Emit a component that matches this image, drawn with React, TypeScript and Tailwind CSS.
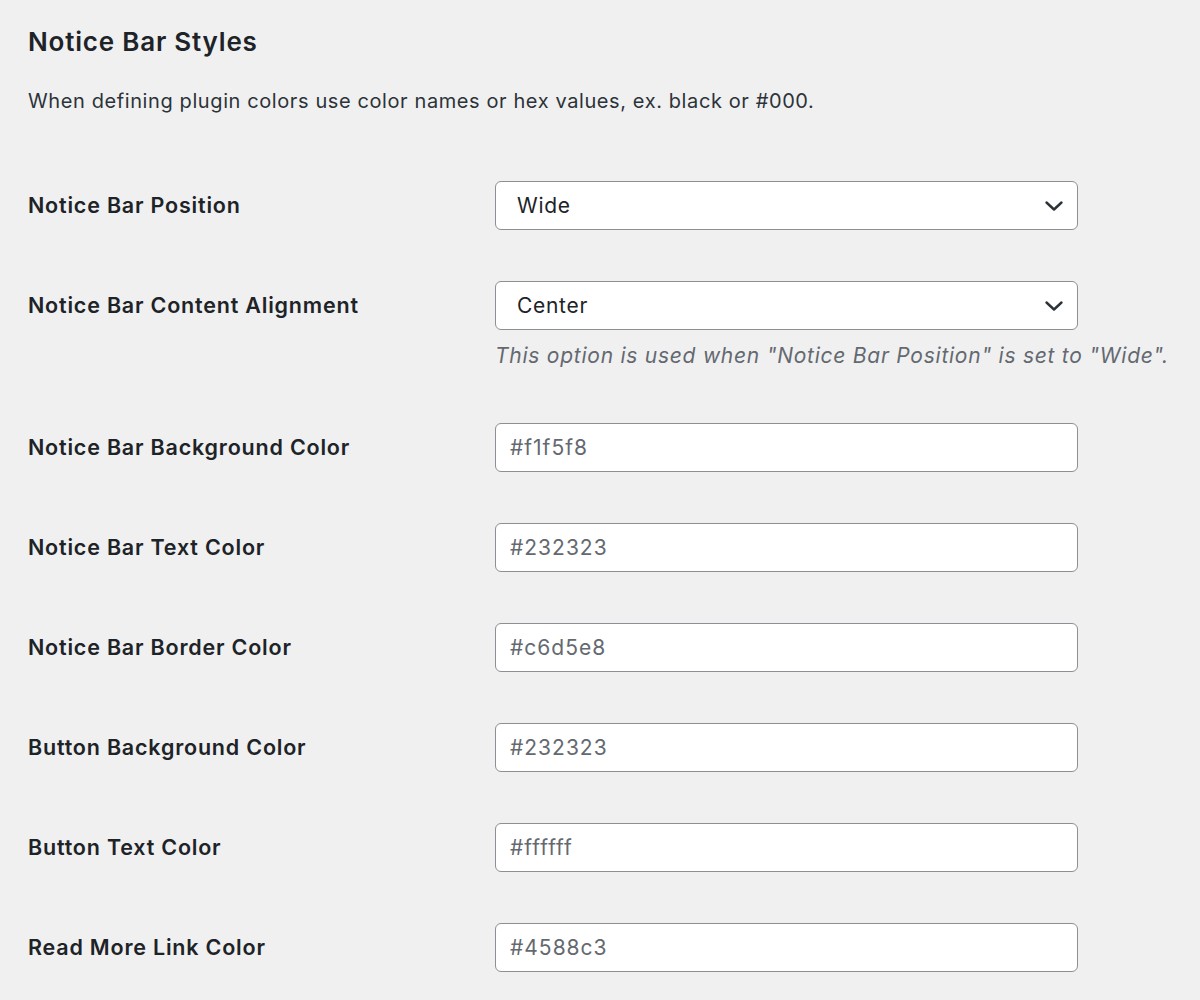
import React from 'react';

type Row = {
    label: string;
    kind: 'select' | 'text';
    value: string;
    hint?: string;
};

const rows: Row[] = [
    { label: 'Notice Bar Position', kind: 'select', value: 'Wide' },
    {
        label: 'Notice Bar Content Alignment',
        kind: 'select',
        value: 'Center',
        hint: 'This option is used when "Notice Bar Position" is set to "Wide".',
    },
    { label: 'Notice Bar Background Color', kind: 'text', value: '#f1f5f8' },
    { label: 'Notice Bar Text Color', kind: 'text', value: '#232323' },
    { label: 'Notice Bar Border Color', kind: 'text', value: '#c6d5e8' },
    { label: 'Button Background Color', kind: 'text', value: '#232323' },
    { label: 'Button Text Color', kind: 'text', value: '#ffffff' },
    { label: 'Read More Link Color', kind: 'text', value: '#4588c3' },
];

// chevron used on the select boxes
const Chevron = () => (
    <svg width="20" height="14" viewBox="0 0 20 14" fill="none" className="shrink-0">
        <path d="M2.5 3.5 L10 10.5 L17.5 3.5" stroke="#2c3338" strokeWidth="2.4" strokeLinecap="round" strokeLinejoin="round" />
    </svg>
);

const Field: React.FC<{ row: Row }> = ({ row }) => {
    if (row.kind === 'select') {
        return (
            <div className="flex h-[49px] w-[583px] items-center justify-between rounded-[6px] border border-[#8c8f94] bg-white pl-[21px] pr-[13px]">
                <span className="text-[21px] tracking-[0.7px] text-[#1d2327]">{row.value}</span>
                <Chevron />
            </div>
        );
    }
    return (
        <div className="flex h-[49px] w-[583px] items-center rounded-[6px] border border-[#8c8f94] bg-white pl-[14px]">
            <span className="text-[21px] tracking-[1px] text-[#646970]">{row.value}</span>
        </div>
    );
};

const App: React.FC = () => {
    return (
        <div className="min-h-[1000px] bg-[#f0f0f1] pl-[28px] font-['Inter',sans-serif] text-[#1d2327]">
            <h2 className="pt-[26px] text-[26px] font-semibold leading-[32px] tracking-[0.8px]">Notice Bar Styles</h2>
            <p className="mt-[29px] text-[20px] leading-[28px] tracking-[0.6px] text-[#2c3338]">
                When defining plugin colors use color names or hex values, ex. black or #000.
            </p>
            <div className="mt-[41px] flex flex-col">
                {rows.map((row) => (
                    <div key={row.label} className={`flex pt-[25px] ${row.hint ? 'pb-[28px]' : 'pb-[26px]'}`}>
                        <div className="flex h-[49px] w-[467px] items-center text-[21.5px] font-semibold tracking-[0.8px]">
                            {row.label}
                        </div>
                        <div className="flex flex-col">
                            <Field row={row} />
                            {row.hint && (
                                <p className="mt-[12px] whitespace-nowrap text-[21px] italic leading-[28px] tracking-[0.75px] text-[#646970]">
                                    {row.hint}
                                </p>
                            )}
                        </div>
                    </div>
                ))}
            </div>
        </div>
    );
};

export default App;
